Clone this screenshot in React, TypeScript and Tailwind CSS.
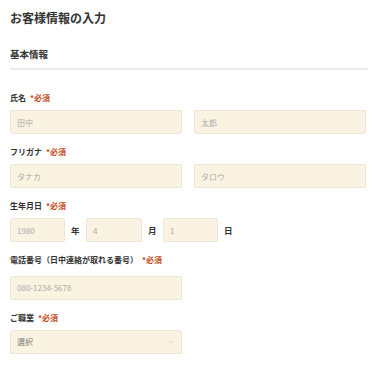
import { ChevronDown } from 'lucide-react';

const font = { fontFamily: '"Noto Sans CJK JP", "Noto Sans", sans-serif' };

function Label({ text }: { text: string }) {
  return (
    <p className="text-[8px] leading-[14px] font-bold text-[#333] mb-[5px]">
      {text}
      <span className="ml-[4px] text-[#c24a1b]">*必須</span>
    </p>
  );
}

function Field({ placeholder, className = '' }: { placeholder: string; className?: string }) {
  return (
    <input
      readOnly
      placeholder={placeholder}
      className={`h-[24px] bg-[#fbf3e1] border border-[#efe6d3] rounded-[2px] px-[6px] text-[8px] font-normal text-[#999] placeholder:text-[#aaa] outline-none ${className}`}
    />
  );
}

export default function App() {
  return (
    <div className="w-[380px] h-[365px] bg-white px-[10px] pt-[9px]" style={font}>
      <h1 className="text-[12px] leading-[18px] font-bold text-[#333]">お客様情報の入力</h1>
      <h2 className="mt-[20px] text-[9.5px] leading-[14px] font-bold text-[#333]">基本情報</h2>
      <div className="mt-[7px] w-[358px] h-[2px] bg-[#ececec]" />

      <div className="mt-[21px]">
        <Label text="氏名" />
        <div className="grid grid-cols-2 gap-[12px] w-[356px]">
          <Field placeholder="田中" className="w-full" />
          <Field placeholder="太郎" className="w-full" />
        </div>
      </div>

      <div className="mt-[11px]">
        <Label text="フリガナ" />
        <div className="grid grid-cols-2 gap-[12px] w-[356px]">
          <Field placeholder="タナカ" className="w-full" />
          <Field placeholder="タロウ" className="w-full" />
        </div>
      </div>

      <div className="mt-[11px]">
        <Label text="生年月日" />
        <div className="flex items-center text-[8.5px] font-bold text-[#333]">
          <Field placeholder="1980" className="w-[55px]" />
          <span className="mx-[6px] w-[9px]">年</span>
          <Field placeholder="4" className="w-[56px]" />
          <span className="mx-[6px] w-[9px]">月</span>
          <Field placeholder="1" className="w-[55px]" />
          <span className="mx-[6px] w-[9px]">日</span>
        </div>
      </div>

      <div className="mt-[11px]">
        <Label text="電話番号（日中連絡が取れる番号）" />
        <Field placeholder="080-1234-5678" className="w-[172px]" />
      </div>

      <div className="mt-[11px]">
        <Label text="ご職業" />
        <div className="h-[24px] w-[172px] bg-[#fbf3e1] border border-[#efe6d3] rounded-[2px] px-[6px] flex items-center justify-between text-[8px] text-[#777]">
          <span>選択</span>
          <ChevronDown size={8} className="text-[#ccc]" />
        </div>
      </div>
    </div>
  );
}
